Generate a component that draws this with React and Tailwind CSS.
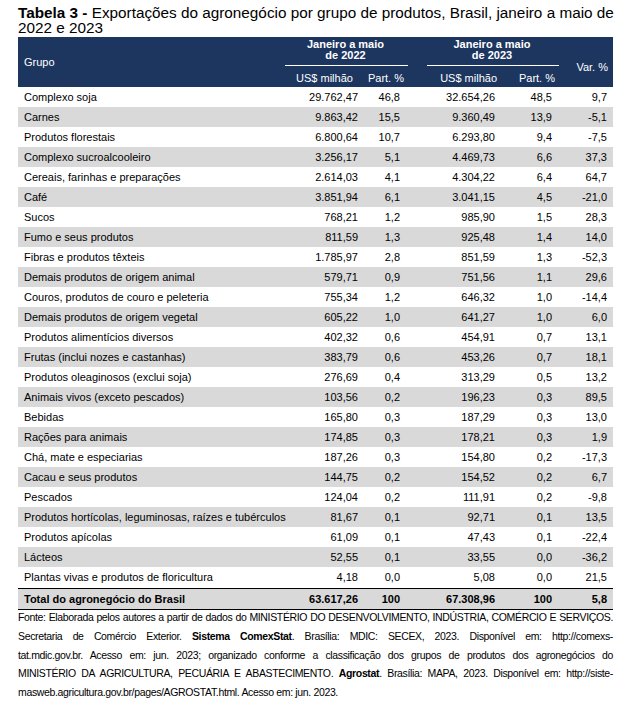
const rows = [
  ["Complexo soja", "29.762,47", "46,8", "32.654,26", "48,5", "9,7"],
  ["Carnes", "9.863,42", "15,5", "9.360,49", "13,9", "-5,1"],
  ["Produtos florestais", "6.800,64", "10,7", "6.293,80", "9,4", "-7,5"],
  ["Complexo sucroalcooleiro", "3.256,17", "5,1", "4.469,73", "6,6", "37,3"],
  ["Cereais, farinhas e preparações", "2.614,03", "4,1", "4.304,22", "6,4", "64,7"],
  ["Café", "3.851,94", "6,1", "3.041,15", "4,5", "-21,0"],
  ["Sucos", "768,21", "1,2", "985,90", "1,5", "28,3"],
  ["Fumo e seus produtos", "811,59", "1,3", "925,48", "1,4", "14,0"],
  ["Fibras e produtos têxteis", "1.785,97", "2,8", "851,59", "1,3", "-52,3"],
  ["Demais produtos de origem animal", "579,71", "0,9", "751,56", "1,1", "29,6"],
  ["Couros, produtos de couro e peleteria", "755,34", "1,2", "646,32", "1,0", "-14,4"],
  ["Demais produtos de origem vegetal", "605,22", "1,0", "641,27", "1,0", "6,0"],
  ["Produtos alimentícios diversos", "402,32", "0,6", "454,91", "0,7", "13,1"],
  ["Frutas (inclui nozes e castanhas)", "383,79", "0,6", "453,26", "0,7", "18,1"],
  ["Produtos oleaginosos (exclui soja)", "276,69", "0,4", "313,29", "0,5", "13,2"],
  ["Animais vivos (exceto pescados)", "103,56", "0,2", "196,23", "0,3", "89,5"],
  ["Bebidas", "165,80", "0,3", "187,29", "0,3", "13,0"],
  ["Rações para animais", "174,85", "0,3", "178,21", "0,3", "1,9"],
  ["Chá, mate e especiarias", "187,26", "0,3", "154,80", "0,2", "-17,3"],
  ["Cacau e seus produtos", "144,75", "0,2", "154,52", "0,2", "6,7"],
  ["Pescados", "124,04", "0,2", "111,91", "0,2", "-9,8"],
  ["Produtos hortícolas, leguminosas, raízes e tubérculos", "81,67", "0,1", "92,71", "0,1", "13,5"],
  ["Produtos apícolas", "61,09", "0,1", "47,43", "0,1", "-22,4"],
  ["Lácteos", "52,55", "0,1", "33,55", "0,0", "-36,2"],
  ["Plantas vivas e produtos de floricultura", "4,18", "0,0", "5,08", "0,0", "21,5"],
];

const cols = "grid grid-cols-[263px_83px_46px_90px_60px_53px]";

function Row({ r, gray, bold }) {
  return (
    <div className={`${cols} h-[20px] items-center ${gray ? "bg-[#d9d9d9]" : "bg-white"} ${bold ? "font-bold" : ""}`}>
      <div className="pl-[6px] whitespace-nowrap">{r[0]}</div>
      <div className="text-right pr-[6px]">{r[1]}</div>
      <div className="text-right pr-[10px]">{r[2]}</div>
      <div className="text-right pr-[5px]">{r[3]}</div>
      <div className="text-right pr-[8px]">{r[4]}</div>
      <div className="text-right pr-[6px]">{r[5]}</div>
    </div>
  );
}

function Line({ children, last }) {
  return (
    <div className={last ? "text-left whitespace-nowrap" : "text-justify [text-align-last:justify] whitespace-nowrap"}>
      {children}
    </div>
  );
}

export default function App() {
  return (
    <div className="w-[630px] h-[702px] bg-white text-black font-['Liberation_Sans',sans-serif] overflow-hidden">
      <div className="pl-[18px] pr-[14px] pt-[5px] text-[15.3px] leading-[15px]">
        <span className="font-bold">Tabela 3 -</span> Exportações do agronegócio por grupo de produtos, Brasil, janeiro a maio de 2022 e 2023
      </div>
      <div className="ml-[18px] w-[595px] mt-[2px] text-[11px]">
        <div className={`${cols} h-[50px] bg-[#1d3660] text-white`}>
          <div className="row-span-2 flex items-center pl-[6px]">Grupo</div>
          <div className="col-span-2 flex flex-col items-center pt-[2px]">
            <div className="font-bold leading-[11px] text-center">Janeiro a maio<br />de 2022</div>
            <div className="self-stretch ml-[4px] mr-[2px] mt-[4px] h-[1px] bg-white"></div>
          </div>
          <div className="col-span-2 flex flex-col pt-[2px]">
            <div className="font-bold leading-[11px] text-center pl-[14px]">Janeiro a maio<br />de 2023</div>
            <div className="ml-[17px] mr-[1px] mt-[4px] h-[1px] bg-white"></div>
          </div>
          <div className="row-span-2 flex items-center justify-end pr-[5px] pt-[10px]">Var. %</div>
          <div className="flex items-center justify-center pl-[4px] pt-[2px]">US$ milhão</div>
          <div className="flex items-center justify-end pr-[6px] pt-[2px]">Part. %</div>
          <div className="flex items-center justify-end pr-[3px] pt-[2px]">US$ milhão</div>
          <div className="flex items-center justify-end pr-[5px] pt-[2px]">Part. %</div>
        </div>
        {rows.map((r, i) => (
          <Row key={i} r={r} gray={i % 2 === 1} />
        ))}
        <div className="border-t-[1.5px] border-b-[1.5px] border-black mt-[1px]">
          <Row r={["Total do agronegócio do Brasil", "63.617,26", "100", "67.308,96", "100", "5,8"]} gray bold />
        </div>
      </div>
      <div className="ml-[18px] w-[595px] mt-[-2px] text-[10.5px] tracking-[-0.35px] leading-[18.8px]">
        <Line>Fonte: Elaborada pelos autores a partir de dados do MINISTÉRIO DO DESENVOLVIMENTO, INDÚSTRIA, COMÉRCIO E SERVIÇOS.</Line>
        <Line>Secretaria de Comércio Exterior. <span className="font-bold">Sistema ComexStat</span>. Brasília: MDIC: SECEX, 2023. Disponível em: http://comexs-</Line>
        <Line>tat.mdic.gov.br. Acesso em: jun. 2023; organizado conforme a classificação dos grupos de produtos dos agronegócios do</Line>
        <Line>MINISTÉRIO DA AGRICULTURA, PECUÁRIA E ABASTECIMENTO. <span className="font-bold">Agrostat</span>. Brasília: MAPA, 2023. Disponível em: http://siste-</Line>
        <Line last>masweb.agricultura.gov.br/pages/AGROSTAT.html. Acesso em: jun. 2023.</Line>
      </div>
    </div>
  );
}
